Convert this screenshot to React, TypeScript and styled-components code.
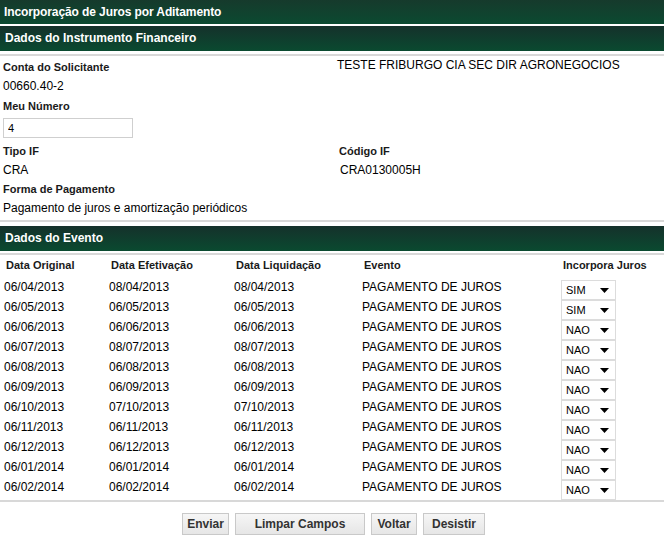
import React from 'react'
import styled, { createGlobalStyle } from 'styled-components'

const GlobalStyle = createGlobalStyle`
  body {
    margin: 0;
    background: #ffffff;
    font-family: 'Liberation Sans', Arial, sans-serif;
    color: #000000;
  }
`

const eventos = [
  { original: '06/04/2013', efetivacao: '08/04/2013', liquidacao: '08/04/2013', incorpora: 'SIM' },
  { original: '06/05/2013', efetivacao: '06/05/2013', liquidacao: '06/05/2013', incorpora: 'SIM' },
  { original: '06/06/2013', efetivacao: '06/06/2013', liquidacao: '06/06/2013', incorpora: 'NAO' },
  { original: '06/07/2013', efetivacao: '08/07/2013', liquidacao: '08/07/2013', incorpora: 'NAO' },
  { original: '06/08/2013', efetivacao: '06/08/2013', liquidacao: '06/08/2013', incorpora: 'NAO' },
  { original: '06/09/2013', efetivacao: '06/09/2013', liquidacao: '06/09/2013', incorpora: 'NAO' },
  { original: '06/10/2013', efetivacao: '07/10/2013', liquidacao: '07/10/2013', incorpora: 'NAO' },
  { original: '06/11/2013', efetivacao: '06/11/2013', liquidacao: '06/11/2013', incorpora: 'NAO' },
  { original: '06/12/2013', efetivacao: '06/12/2013', liquidacao: '06/12/2013', incorpora: 'NAO' },
  { original: '06/01/2014', efetivacao: '06/01/2014', liquidacao: '06/01/2014', incorpora: 'NAO' },
  { original: '06/02/2014', efetivacao: '06/02/2014', liquidacao: '06/02/2014', incorpora: 'NAO' },
]

const App = () => {
  return <Page>
    <GlobalStyle />
    <TitleBar>Incorporação de Juros por Aditamento</TitleBar>
    <SectionBar>Dados do Instrumento Financeiro</SectionBar>
    <Divider />

    <FormGrid>
      <Field>
        <Label>Conta do Solicitante</Label>
        <Value>00660.40-2</Value>
      </Field>
      <Field>
        <Value $shift={-2}>TESTE FRIBURGO CIA SEC DIR AGRONEGOCIOS</Value>
      </Field>

      <Field>
        <Label $shift={1}>Meu Número</Label>
        <TextInput type='text' defaultValue='4' />
      </Field>
      <Field />

      <Field>
        <Label>Tipo IF</Label>
        <Value>CRA</Value>
      </Field>
      <Field>
        <Label $indent={2}>Código IF</Label>
        <Value $indent={3}>CRA0130005H</Value>
      </Field>

      <Field>
        <Label>Forma de Pagamento</Label>
        <Value>Pagamento de juros e amortização periódicos</Value>
      </Field>
    </FormGrid>

    <Divider $gap={2} />
    <SectionBar $top={4}>Dados do Evento</SectionBar>
    <Divider $gap={2} />

    <EventTable>
      <HeadCell>Data Original</HeadCell>
      <HeadCell>Data Efetivação</HeadCell>
      <HeadCell>Data Liquidação</HeadCell>
      <HeadCell>Evento</HeadCell>
      <HeadCell>Incorpora Juros</HeadCell>

      {eventos.map((e, i) => (
        <React.Fragment key={i}>
          <Cell>{e.original}</Cell>
          <Cell>{e.efetivacao}</Cell>
          <Cell>{e.liquidacao}</Cell>
          <Cell>PAGAMENTO DE JUROS</Cell>
          <SelectCell>
            <SelectWrap>
              <Select defaultValue={e.incorpora}>
                <option value='SIM'>SIM</option>
                <option value='NAO'>NAO</option>
              </Select>
              <Arrow width='9' height='5' viewBox='0 0 9 5'>
                <path d='M0 0 L9 0 L4.5 5 Z' fill='#000' />
              </Arrow>
            </SelectWrap>
          </SelectCell>
        </React.Fragment>
      ))}
    </EventTable>

    <Divider $gap={3} />

    <ButtonRow>
      <Button $w={47}>Enviar</Button>
      <Button $w={130}>Limpar Campos</Button>
      <Button $w={46}>Voltar</Button>
      <Button $w={62}>Desistir</Button>
    </ButtonRow>
  </Page>
}

export default App

const Page = styled.div`
  width: 664px;
  font-size: 12px;
`

const TitleBar = styled.div`
  height: 24px;
  line-height: 24px;
  padding-left: 4px;
  margin-bottom: 2px;

  background: linear-gradient(to bottom, #163a2c 0%, #0b4a31 100%);
  color: #ffffff;
  font-weight: 700;
  font-size: 12px;
  letter-spacing: -0.1px;
`

const SectionBar = styled.div<{ $top?: number }>`
  height: 25px;
  line-height: 25px;
  padding-left: 5px;
  margin-top: ${p => p.$top || 0}px;

  background: linear-gradient(to bottom, #15312b 0%, #0a4a30 100%);
  color: #ffffff;
  font-weight: 700;
  font-size: 12px;
`

const Divider = styled.div<{ $gap?: number }>`
  height: 2px;
  margin-top: ${p => p.$gap ?? 3}px;
  background: #d8d8d8;
`

const FormGrid = styled.div`
  display: grid;
  grid-template-columns: 334px 1fr;
  padding-left: 3px;
  padding-top: 2px;
`

const Field = styled.div`
  display: flex;
  flex-direction: column;
  align-items: flex-start;
`

const Label = styled.div<{ $shift?: number; $indent?: number }>`
  height: 19px;
  line-height: 19px;
  margin-top: ${p => p.$shift || 0}px;
  margin-left: ${p => p.$indent || 0}px;
  font-size: 11px;
  font-weight: 700;
  color: #1a1a1a;
`

const Value = styled.div<{ $shift?: number; $indent?: number }>`
  height: 19px;
  line-height: 19px;
  margin-top: ${p => p.$shift || 0}px;
  margin-left: ${p => p.$indent || 0}px;
  font-size: 12px;
  color: #000000;
`

const TextInput = styled.input`
  box-sizing: border-box;
  width: 130px;
  height: 20px;
  margin: 2px 0 4px 0;
  padding: 0 4px;

  border: 1px solid #cfcfcf;
  font-family: 'Liberation Sans', Arial, sans-serif;
  font-size: 11px;
  color: #000000;
  outline: none;
`

const EventTable = styled.div`
  display: grid;
  grid-template-columns: 105px 125px 128px 199px 1fr;
  grid-template-rows: 20px;
  grid-auto-rows: 20px;
  padding-left: 4px;
  padding-top: 2px;
`

const HeadCell = styled.div`
  line-height: 16px;
  padding-left: 2px;
  font-size: 11px;
  font-weight: 700;
  color: #1a1a1a;
`

const Cell = styled.div`
  line-height: 20px;
  font-size: 12px;
  color: #000000;
`

const SelectCell = styled.div`
  display: flex;
  align-items: flex-start;
  padding-top: 3px;
`

const SelectWrap = styled.div`
  position: relative;
  width: 55px;
  height: 20px;
`

const Select = styled.select`
  appearance: none;
  box-sizing: border-box;
  width: 55px;
  height: 20px;
  padding: 0 0 0 4px;

  background: #ffffff;
  border: 1px solid #dcdcdc;
  border-radius: 0;
  font-family: 'Liberation Sans', Arial, sans-serif;
  font-size: 11px;
  color: #000000;
  outline: none;
`

const Arrow = styled.svg`
  position: absolute;
  right: 7px;
  top: 8px;
  pointer-events: none;
`

const ButtonRow = styled.div`
  display: flex;
  justify-content: center;
  gap: 6px;
  padding-top: 11px;
  padding-left: 3px;
`

const Button = styled.button<{ $w: number }>`
  box-sizing: border-box;
  width: ${p => p.$w}px;
  height: 22px;
  padding: 0;

  background: linear-gradient(to bottom, #f6f6f6 0%, #e6e6e6 100%);
  border: 1px solid #c9c9c9;
  border-radius: 0;
  font-family: 'Liberation Sans', Arial, sans-serif;
  font-size: 12px;
  font-weight: 700;
  color: #333333;
  cursor: pointer;
`
